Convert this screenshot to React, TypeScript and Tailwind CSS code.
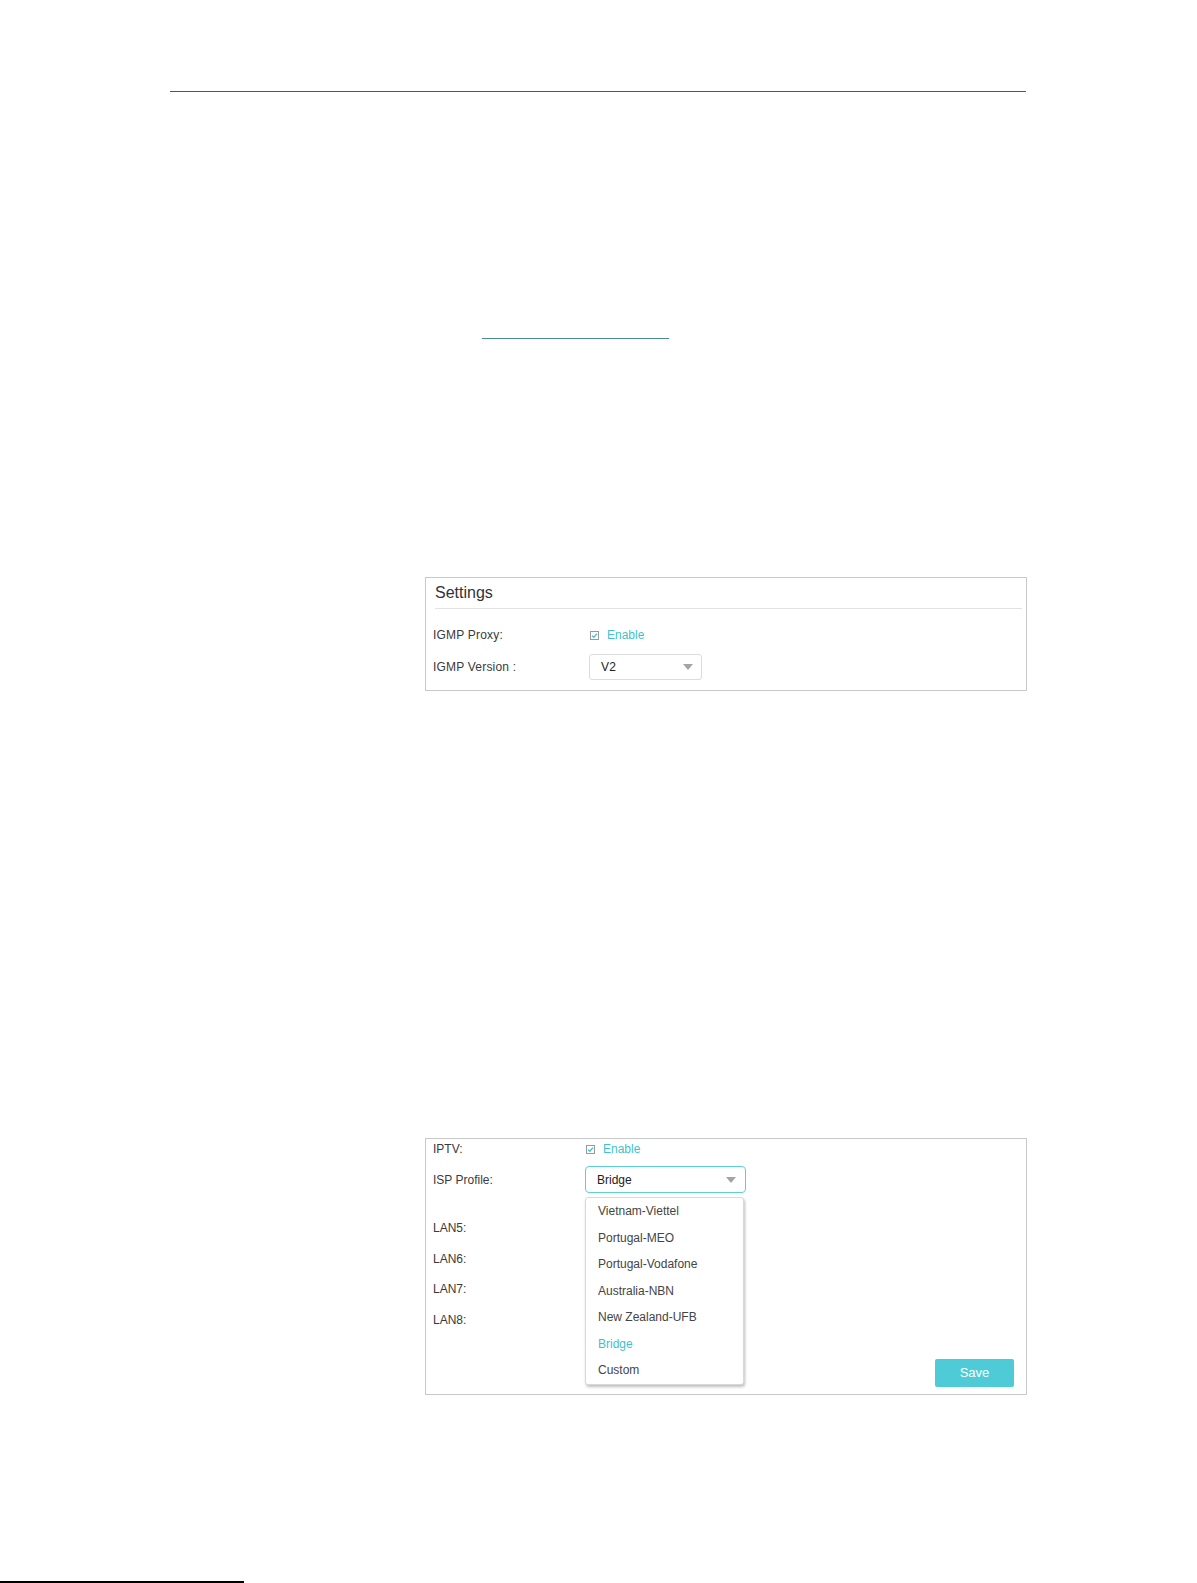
import React from 'react';

const font = { fontFamily: '"Liberation Sans", Arial, sans-serif' };

const Check: React.FC = () => (
  <span className="flex h-[9px] w-[9px] items-center justify-center border border-[#9a9a9a] bg-white">
    <svg width="7" height="7" viewBox="0 0 7 7">
      <path d="M1 3.6 L2.8 5.3 L6 1.6" fill="none" stroke="#3fc1cf" strokeWidth="1.3" />
    </svg>
  </span>
);

const Arrow: React.FC = () => (
  <svg width="10" height="6" viewBox="0 0 10 6">
    <path d="M0 0 H10 L5 6 Z" fill="#a4a4a4" />
  </svg>
);

const ispProfiles = [
  'Vietnam-Viettel',
  'Portugal-MEO',
  'Portugal-Vodafone',
  'Australia-NBN',
  'New Zealand-UFB',
  'Bridge',
  'Custom',
];

export default function App() {
  return (
    <div className="w-[1197px] h-[1583px] bg-white overflow-hidden text-[#3a3a3a] flex flex-col pt-[91px]" style={font}>
      {/* page header rule */}
      <div className="ml-[170px] w-[856px] h-px bg-[#555555] shrink-0" />

      {/* link underline */}
      <div className="mt-[246px] ml-[482px] w-[187px] h-px bg-[#4a8a9c] shrink-0" />

      {/* IGMP settings panel */}
      <div className="mt-[238px] ml-[425px] w-[602px] border border-[#c9c9c9] pb-[10px] shrink-0">
        <div className="pt-[5px] pl-[9px] h-[25px] text-[16px] leading-[20px] text-[#333]">Settings</div>
        <div className="mt-[5px] ml-[9px] mr-[4px] h-px bg-[#e2e2e2]" />
        <div className="mt-[16px] pl-[7px] flex items-center h-[20px] text-[12px] tracking-[0.2px]">
          <span className="w-[156px]">IGMP Proxy:</span>
          <span className="ml-px flex items-center gap-[8px] text-[#3fc1cf] tracking-normal">
            <Check />
            Enable
          </span>
        </div>
        <div className="mt-[9px] pl-[7px] flex items-center h-[26px] text-[12px] tracking-[0.2px]">
          <span className="w-[156px]">IGMP Version :</span>
          <div className="w-[113px] h-[26px] border border-[#dcdcdc] rounded-[3px] flex items-center justify-between pl-[11px] pr-[8px] text-[#222]">
            V2
            <Arrow />
          </div>
        </div>
      </div>

      {/* IPTV panel */}
      <div className="mt-[447px] ml-[425px] w-[602px] border border-[#c9c9c9] pb-[7px] text-[12px] shrink-0">
        <div className="pl-[7px] flex items-center h-[20px]">
          <span className="w-[153px]">IPTV:</span>
          <span className="flex items-center gap-[8px] text-[#3fc1cf]">
            <Check />
            Enable
          </span>
        </div>
        <div className="mt-[7px] pl-[7px] flex items-center h-[27px]">
          <span className="w-[152px]">ISP Profile:</span>
          <div className="relative">
            <div className="w-[161px] h-[27px] border border-[#5ccfd9] rounded-[4px] flex items-center justify-between pl-[11px] pr-[9px] text-[#222]">
              Bridge
              <Arrow />
            </div>
            <div className="absolute left-0 top-[31px] z-10 w-[159px] bg-white border border-[#d8d8d8] rounded-[3px] shadow-[1px_2px_3px_rgba(0,0,0,0.25)]">
              {ispProfiles.map(p => (
                <div
                  key={p}
                  className={`h-[26.5px] flex items-center pl-[12px] ${p === 'Bridge' ? 'text-[#3fc1cf]' : 'text-[#444]'}`}
                >
                  {p}
                </div>
              ))}
            </div>
          </div>
        </div>
        <div className="mt-[25px] pl-[7px] h-[20px] flex items-center">LAN5:</div>
        <div className="mt-[11px] pl-[7px] h-[20px] flex items-center">LAN6:</div>
        <div className="mt-[10px] pl-[7px] h-[20px] flex items-center">LAN7:</div>
        <div className="mt-[11px] pl-[7px] h-[20px] flex items-center">LAN8:</div>
        <div className="mt-[29px] pr-[12px] flex justify-end">
          <button className="w-[79px] h-[28px] bg-[#4ecbd6] text-white text-[13px] rounded-[2px]">Save</button>
        </div>
      </div>

      {/* page bottom rule */}
      <div className="mt-auto w-[244px] h-[2px] bg-black shrink-0" />
    </div>
  );
}
